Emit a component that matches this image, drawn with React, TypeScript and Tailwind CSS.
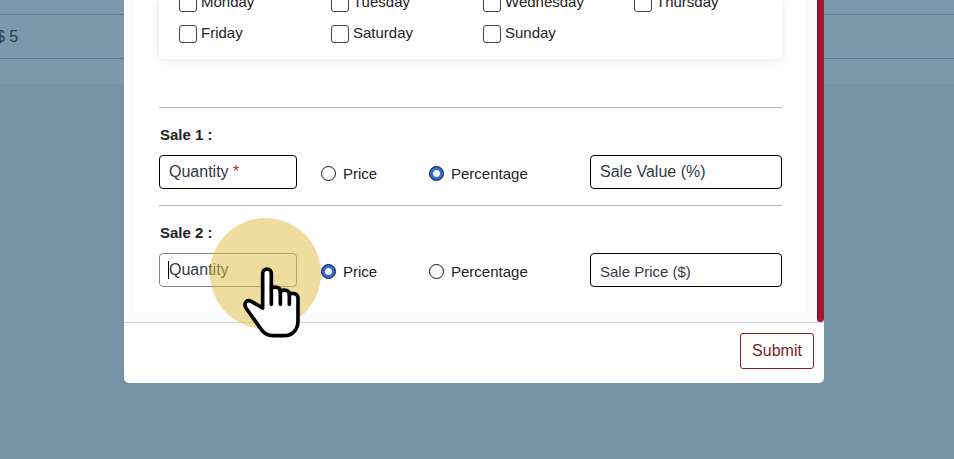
import { useState } from 'react';

const DAYS = ['Monday', 'Tuesday', 'Wednesday', 'Thursday', 'Friday', 'Saturday', 'Sunday'];

type SaleType = 'price' | 'percentage';

function HandPointer() {
  return (
    <svg
      viewBox="0 0 180 216"
      className="absolute left-[83px] top-[13px] w-[60px] h-[72px] z-20 pointer-events-none"
      fill="#fff"
      stroke="#000"
      strokeWidth="11"
      strokeLinecap="round"
      strokeLinejoin="round"
      aria-hidden="true"
    >
      <path d="M62 126V22A13 13 0 0 1 88 22V66C101 60 115 64 115 76C128 69 142 73 142 85C155 78 168 84 168 97V164C168 190 152 209 126 209H94C75 209 64 200 56 188L12 126C4 112 14 99 28 106Z" />
      <path d="M88 66V115M115 76V115M142 85V115" fill="none" />
    </svg>
  );
}

function SaleTypeOption({
  name,
  label,
  checked,
  onSelect
}: {
  name: string;
  label: string;
  checked: boolean;
  onSelect: () => void;
}) {
  return (
    <label className="flex items-center gap-[7px] text-[15px] leading-5 text-[#222]">
      <input
        type="radio"
        name={name}
        checked={checked}
        onChange={onSelect}
        className="appearance-none w-[15px] h-[15px] shrink-0 rounded-full border border-[#111] bg-white checked:bg-[radial-gradient(circle,#fff_3px,#2f6be0_4px)]"
      />
      {label}
    </label>
  );
}

function SaleRow({
  index,
  initialType,
  required = false,
  focused = false
}: {
  index: number;
  initialType: SaleType;
  required?: boolean;
  focused?: boolean;
}) {
  const [type, setType] = useState<SaleType>(initialType);
  const [quantity, setQuantity] = useState('');
  const id = `sale-${index}`;

  return (
    <section className="border-t border-[#b5b5b5] pt-[17px]">
      <h3 className="text-[15px] leading-5 font-bold text-[#222] px-px mb-[10px]">Sale {index} :</h3>
      <div className="flex items-center">
        {/* Quantity */}
        <div className="relative w-[138px] mr-6">
          <input
            id={`${id}-quantity`}
            value={quantity}
            onChange={(e) => setQuantity(e.target.value)}
            className={
              focused
                ? 'block w-full h-[34px] px-[9px] rounded-[4px] border border-[#888] bg-white outline-none'
                : 'block w-full h-[34px] px-[9px] rounded-[4px] border border-black bg-white outline-none'
            }
          />
          {!quantity && (
            <label
              htmlFor={`${id}-quantity`}
              className="absolute left-[10px] top-[7px] text-base leading-5 text-[#333a48] pointer-events-none"
            >
              Quantity {required && <span className="text-[#c8202c]">*</span>}
            </label>
          )}
          {focused && (
            <>
              <span className="absolute left-[9px] top-2 w-px h-[18px] bg-black" />
              <span className="absolute left-[51px] top-[-35px] w-[111px] h-[111px] rounded-full bg-[#e0bb40]/50 z-10 pointer-events-none" />
              <HandPointer />
            </>
          )}
        </div>

        {/* Sale type */}
        <div className="flex-1 grid grid-cols-[108px_1fr] pt-[3px]">
          <SaleTypeOption
            name={id}
            label="Price"
            checked={type === 'price'}
            onSelect={() => setType('price')}
          />
          <SaleTypeOption
            name={id}
            label="Percentage"
            checked={type === 'percentage'}
            onSelect={() => setType('percentage')}
          />
        </div>

        <input
          aria-label="Sale amount"
          placeholder={type === 'price' ? 'Sale Price ($)' : 'Sale Value (%)'}
          className={
            type === 'price'
              ? 'w-[192px] h-[34px] px-[9px] pt-0.5 rounded-[4px] border border-black bg-white text-[15px] placeholder:text-[#333a48] outline-none'
              : 'w-[192px] h-[34px] px-[9px] rounded-[4px] border border-black bg-white text-base placeholder:text-[#333a48] outline-none'
          }
        />
      </div>
    </section>
  );
}

export default function App() {
  return (
    <div className="relative min-h-screen overflow-hidden bg-[#7794a7] font-['Liberation_Sans',Arial,sans-serif]">
      {/* Page behind the dialog */}
      <main className="h-[84px] pt-[14px] bg-[#7c98ab]">
        <table className="w-full border-collapse">
          <tbody>
            <tr className="h-11 border-y border-[#5d7a90]">
              <td className="text-base leading-5 text-[#1f3c55]">
                <span className="block -ml-1">$ 5</span>
              </td>
            </tr>
          </tbody>
        </table>
      </main>

      {/* Dialog */}
      <div className="absolute inset-0 flex items-start justify-center pr-[6px]">
        <form
          className="w-full max-w-[700px] bg-white rounded-b-[5px]"
          onSubmit={(e) => e.preventDefault()}
        >
          <div className="flex bg-[#fbfbfe]">
            <div className="flex-1 px-[10px] pb-[10px]">
              <div className="bg-white px-[25px] pb-[25px]">
                <fieldset className="mb-12 px-5 pb-4 rounded-b-[5px] bg-white shadow-[0_0_10px_rgba(0,0,0,0.12)]">
                  <div className="grid grid-cols-[152px_152px_151px_1fr] gap-y-[13px] -mt-[6px]">
                    {DAYS.map((day) => (
                      <label
                        key={day}
                        className="flex items-start gap-1 text-[15px] leading-4 text-[#222]"
                      >
                        <input
                          type="checkbox"
                          className="appearance-none w-[18px] h-[18px] shrink-0 rounded-[3px] border border-[#444] bg-white checked:bg-[#2c66d6]"
                        />
                        {day}
                      </label>
                    ))}
                  </div>
                </fieldset>

                <div className="flex flex-col gap-4">
                  <SaleRow index={1} initialType="percentage" required />
                  <SaleRow index={2} initialType="price" focused />
                </div>
              </div>
            </div>
            {/* Scrollbar thumb */}
            <div className="w-[7px] rounded-b-full border-l border-[#6b1230] bg-[#a31533]" />
          </div>

          <footer className="flex justify-end border-t border-[#d5d5d8] px-[10px] pt-[10px] pb-[14px]">
            <button
              type="submit"
              className="w-[74px] h-9 rounded-[3px] border border-[#8a1c1c] text-base leading-5 text-[#7c1c1c]"
            >
              Submit
            </button>
          </footer>
        </form>
      </div>
    </div>
  );
}
